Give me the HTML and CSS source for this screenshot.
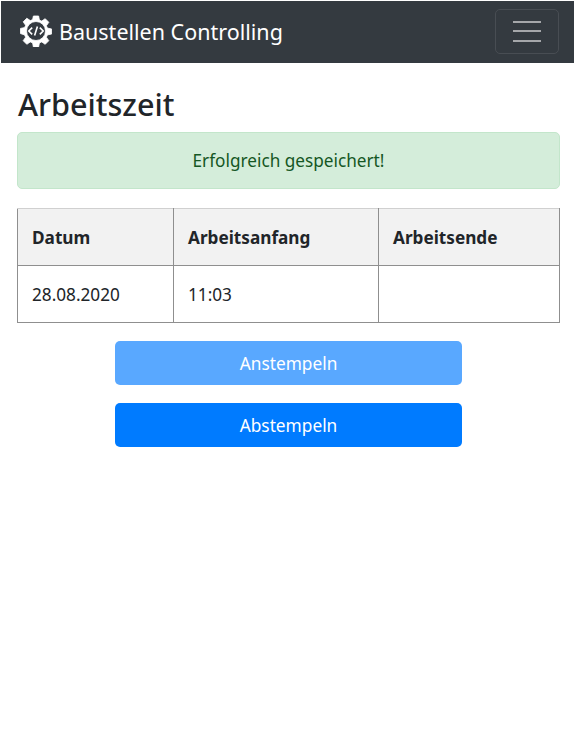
FILE: index.html
```html
<!DOCTYPE html>
<html lang="de">
<head>
  <meta charset="UTF-8">
  <meta name="viewport" content="width=device-width, initial-scale=1.0">
  <title>Arbeitszeit</title>
  <link rel="stylesheet" href="styles.css">
</head>
<body>
  <nav class="navbar">
    <a class="brand" href="#">
      <svg class="brand-icon" viewBox="0 0 32 32" width="32" height="32" aria-hidden="true">
        <path fill="#fff" stroke="#fff" stroke-width="0.8" stroke-linejoin="round" fill-rule="evenodd" d="M13.4 1h5.2l.8 4.1 2.3 1 3.5-2.4 3.6 3.6-2.4 3.5 1 2.3 4.1.8v5.2l-4.1.8-1 2.3 2.4 3.5-3.6 3.6-3.5-2.4-2.3 1-.8 4.1h-5.2l-.8-4.1-2.3-1-3.5 2.4-3.6-3.6 2.4-3.5-1-2.3L.5 18.6v-5.2l4.1-.8 1-2.3-2.4-3.5 3.6-3.6 3.5 2.4 2.3-1zM16 6.5a9.5 9.5 0 1 0 0 19 9.5 9.5 0 0 0 0-19z"/>
        <path fill="none" stroke="#fff" stroke-width="1.6" d="M12.2 12.6 8.8 16l3.4 3.4M19.8 12.6l3.4 3.4-3.4 3.4M17.4 11.4l-2.8 9.2"/>
      </svg>
      Baustellen Controlling
    </a>
    <button class="toggler" type="button" aria-label="Menü">
      <span class="toggler-line"></span>
      <span class="toggler-line"></span>
      <span class="toggler-line"></span>
    </button>
  </nav>

  <main class="content">
    <h2 class="title">Arbeitszeit</h2>
    <div class="alert">Erfolgreich gespeichert!</div>

    <table class="zeiten">
      <thead>
        <tr>
          <th class="spalte-datum">Datum</th>
          <th class="spalte-anfang">Arbeitsanfang</th>
          <th>Arbeitsende</th>
        </tr>
      </thead>
      <tbody>
        <tr>
          <td>28.08.2020</td>
          <td>11:03</td>
          <td></td>
        </tr>
      </tbody>
    </table>

    <div class="aktionen">
      <button class="btn btn-disabled" type="button">Anstempeln</button>
      <button class="btn" type="button">Abstempeln</button>
    </div>
  </main>
</body>
</html>
```

FILE: styles.css
```css
body {
  margin: 0;
  padding: 1px 1px 0 1px;
  font-family: "Noto Sans", "Open Sans", sans-serif;
  font-size: 17.2px;
  color: #212529;
  background-color: #fff;
}
.navbar {
  display: flex;
  align-items: center;
  justify-content: space-between;
  height: 62px;
  padding: 0 15px 0 19px;
  background-color: #343a40;
}
.brand {
  display: flex;
  align-items: center;
  gap: 7px;
  padding-bottom: 2px;
  color: #fff;
  font-size: 21.5px;
  text-decoration: none;
}
.toggler {
  display: flex;
  flex-direction: column;
  align-items: center;
  justify-content: center;
  gap: 7.5px;
  width: 64px;
  height: 45px;
  margin-bottom: 2px;
  padding: 0;
  background: none;
  border: 1px solid #484d53;
  border-radius: 5px;
}
.toggler-line {
  width: 28px;
  height: 2px;
  background-color: #a5a7aa;
}
.content {
  padding: 0 14px 0 16px;
}
.title {
  margin: 23px 0 10px 1px;
  font-size: 30.6px;
  font-weight: 500;
  line-height: 36px;
}
.alert {
  height: 57px;
  line-height: 55px;
  text-align: center;
  color: #155724;
  background-color: #d4edda;
  border: 1px solid #c3e6cb;
  border-radius: 5px;
  box-sizing: border-box;
}
.zeiten {
  width: 100%;
  margin-top: 19px;
  border-collapse: collapse;
  table-layout: fixed;
}
.zeiten th, .zeiten td {
  height: 56px;
  padding: 0 14px;
  text-align: left;
  border: 1px solid #8f8f8f;
}
.zeiten th {
  background-color: #f2f2f2;
  border-top-color: #d0d0d0;
}
.spalte-datum {
  width: 127px;
}
.spalte-anfang {
  width: 176px;
}
.aktionen {
  display: flex;
  flex-direction: column;
  align-items: center;
  gap: 18px;
  margin-top: 18px;
}
.btn {
  width: 347px;
  height: 44px;
  color: #fff;
  font-family: inherit;
  font-size: 17.3px;
  background-color: #007bff;
  border: none;
  border-radius: 5px;
}
.btn-disabled {
  background-color: #59a8ff;
}
```
